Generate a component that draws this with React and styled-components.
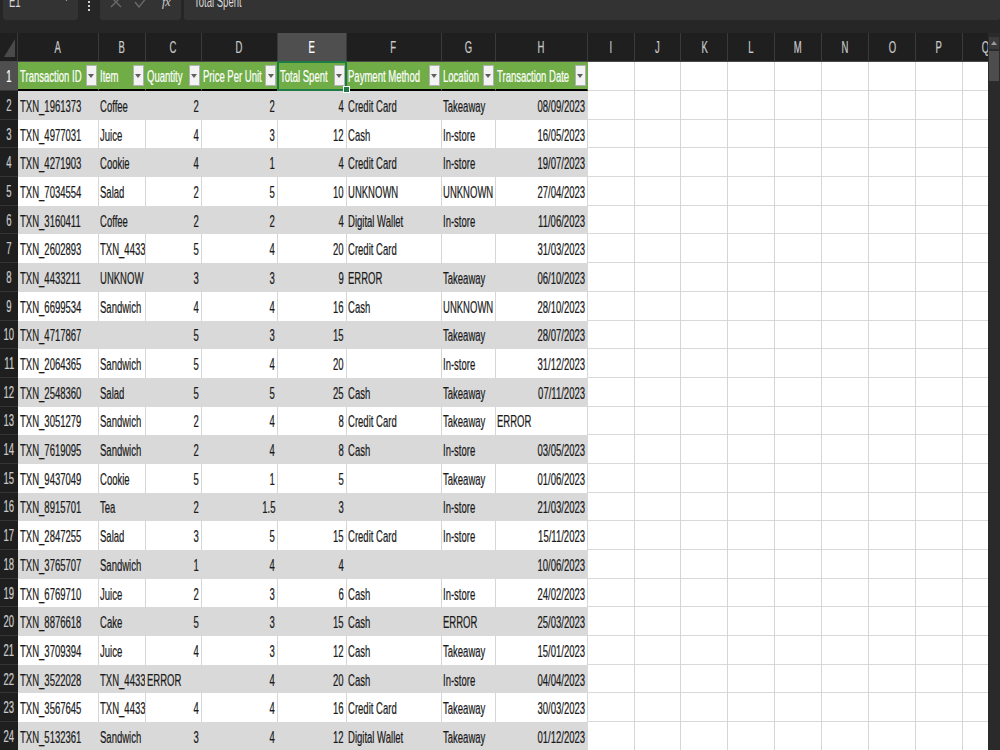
import React from 'react';
import styled, { createGlobalStyle } from 'styled-components';

const FONT = '"Liberation Sans", Arial, sans-serif';

// widths of row header + columns A..Q, measured off the sheet
const COLS = '18.3px 80.4px 47px 56px 76.6px 68.4px 95px 54px 92px repeat(9, 46.9px)';

// the sheet font is a tall, condensed face: squeeze Liberation Sans to match
const SQUEEZE = 'scale(0.68, 1.18)';

const GlobalStyle = createGlobalStyle`
  html, body {
    margin: 0;
    padding: 0;
    background: #262626;
    overflow: hidden;
  }
  body {
    font-family: ${FONT};
  }
`;

const Window = styled.div`
  width: 1000px;
  height: 750px;
  display: flex;
  flex-direction: column;
  background: #262626;
  overflow: hidden;
`;

const Toolbar = styled.div`
  height: 20px;
  flex: none;
  display: flex;
  align-items: flex-end;
  gap: 3px;
  padding-left: 3px;
  overflow: hidden;
`;

const Box = styled.div`
  height: 30px;
  display: flex;
  align-items: center;
  background: #333333;
  border-radius: 0 0 3px 3px;
  box-sizing: border-box;
  padding: 10px 8px 0 ${(p) => p.$padLeft || 6}px;
  color: #d8d8d8;
  font-size: 14px;
  width: ${(p) => (p.$width ? `${p.$width}px` : 'auto')};
  flex: ${(p) => (p.$grow ? 1 : 'none')};
  gap: ${(p) => p.$gap || 0}px;
`;

const BoxText = styled.span`
  display: inline-block;
  white-space: nowrap;
  transform-origin: left center;
  transform: translateY(-9px) ${SQUEEZE};
  flex: 1;
`;

const Dots = styled.div`
  width: 16px;
  flex: none;
  display: flex;
  flex-direction: column;
  align-items: center;
  gap: 2px;
  padding-bottom: 9px;
  & > i {
    width: 2px;
    height: 2px;
    background: #cfcfcf;
    display: block;
  }
`;

const Gap = styled.div`
  height: 13px;
  flex: none;
`;

const SheetArea = styled.div`
  flex: 1;
  display: flex;
  min-height: 0;
`;

const Grid = styled.div`
  flex: 1;
  overflow: hidden;
  position: relative;
`;

const Row = styled.div`
  display: grid;
  grid-template-columns: ${COLS};
  height: ${(p) => p.$h || 28.7}px;
`;

const origins = { left: 'left center', right: 'right center', center: 'center center' };

const Label = styled.span`
  display: inline-block;
  white-space: nowrap;
  transform-origin: ${(p) => origins[p.$align || 'left']};
  transform: ${SQUEEZE};
  -webkit-text-stroke: 0.2px currentColor;
`;

const ColHead = styled.div`
  background: ${(p) => (p.$active ? '#4f4f4f' : '#1f1f1f')};
  border-right: 1px solid #3a3a3a;
  border-bottom: 1px solid ${(p) => (p.$active ? '#2e8b57' : '#4a4a4a')};
  color: ${(p) => (p.$active ? '#ffffff' : '#c9c9c9')};
  font-size: 14px;
  display: flex;
  align-items: center;
  justify-content: center;
  overflow: hidden;
`;

const Corner = styled.div`
  background: #1f1f1f;
  border-right: 1px solid #3a3a3a;
  border-bottom: 1px solid #4a4a4a;
  display: flex;
  align-items: flex-end;
  justify-content: flex-end;
  padding: 0 2px 4px 0;
`;

const RowHead = styled.div`
  background: ${(p) => (p.$active ? '#4f4f4f' : '#1f1f1f')};
  border-bottom: 1px solid #353535;
  color: ${(p) => (p.$active ? '#ffffff' : '#c9c9c9')};
  font-size: 14px;
  display: flex;
  align-items: center;
  justify-content: center;
  box-sizing: border-box;
  overflow: hidden;
`;

const bg = { head: '#70ad47', grey: '#d9d9d9', white: '#ffffff', out: '#ffffff' };

const Cell = styled.div`
  position: relative;
  background: ${(p) => bg[p.$band]};
  color: ${(p) => (p.$band === 'head' ? '#ffffff' : '#1a1a1a')};
  font-size: 14px;
  box-sizing: border-box;
  display: flex;
  align-items: center;
  justify-content: ${(p) => (p.$num ? 'flex-end' : 'flex-start')};
  padding: 1px 2px 0 1.5px;
  white-space: nowrap;
  overflow: hidden;
  border-right: 1px solid
    ${(p) => (p.$band === 'grey' || p.$band === 'head' ? 'transparent' : '#d6d6d6')};
  border-bottom: ${(p) =>
    p.$band === 'head' ? '2px solid #000' : p.$band === 'out' ? '1px solid #d9d9d9' : 'none'};
`;

const Selection = styled.div`
  position: absolute;
  inset: -1px -1px -2px -1px;
  border: 2px solid #1f7a45;
  pointer-events: none;
  z-index: 2;
`;

const FilterButton = styled.div`
  position: absolute;
  right: 1px;
  top: 3px;
  bottom: 3px;
  width: 11px;
  background: #f3f3f3;
  border: 1px solid #b0b0b0;
  box-sizing: border-box;
  display: flex;
  align-items: center;
  justify-content: center;
  &::after {
    content: '';
    border-left: 3px solid transparent;
    border-right: 3px solid transparent;
    border-top: 4px solid #5f5f5f;
  }
`;

const FillHandle = styled.div`
  position: absolute;
  right: -4px;
  bottom: -4px;
  width: 5px;
  height: 5px;
  background: #1f7a45;
  border: 1px solid #ffffff;
  z-index: 3;
`;

const Scrollbar = styled.div`
  width: 12px;
  flex: none;
  background: #2a2a2a;
  display: flex;
  flex-direction: column;
  align-items: center;
  padding-top: 4px;
  gap: 2px;
`;

const ScrollArrow = styled.div`
  width: 10px;
  height: 12px;
  background: #3a3a3a;
  display: flex;
  align-items: center;
  justify-content: center;
  &::after {
    content: '';
    border-left: 3px solid transparent;
    border-right: 3px solid transparent;
    border-bottom: 4px solid #9a9a9a;
  }
`;

const ScrollThumb = styled.div`
  width: 10px;
  height: 30px;
  background: #4d4d4d;
`;

const letters = 'ABCDEFGHIJKLMNOPQ'.split('');

const header = [
  'Transaction ID', 'Item', 'Quantity', 'Price Per Unit',
  'Total Spent', 'Payment Method', 'Location', 'Transaction Date',
];

const rows = [
  ['TXN_1961373', 'Coffee', 2, 2, 4, 'Credit Card', 'Takeaway', '08/09/2023'],
  ['TXN_4977031', 'Juice', 4, 3, 12, 'Cash', 'In-store', '16/05/2023'],
  ['TXN_4271903', 'Cookie', 4, 1, 4, 'Credit Card', 'In-store', '19/07/2023'],
  ['TXN_7034554', 'Salad', 2, 5, 10, 'UNKNOWN', 'UNKNOWN', '27/04/2023'],
  ['TXN_3160411', 'Coffee', 2, 2, 4, 'Digital Wallet', 'In-store', '11/06/2023'],
  ['TXN_2602893', 'TXN_4433', 5, 4, 20, 'Credit Card', '', '31/03/2023'],
  ['TXN_4433211', 'UNKNOW', 3, 3, 9, 'ERROR', 'Takeaway', '06/10/2023'],
  ['TXN_6699534', 'Sandwich', 4, 4, 16, 'Cash', 'UNKNOWN', '28/10/2023'],
  ['TXN_4717867', '', 5, 3, 15, '', 'Takeaway', '28/07/2023'],
  ['TXN_2064365', 'Sandwich', 5, 4, 20, '', 'In-store', '31/12/2023'],
  ['TXN_2548360', 'Salad', 5, 5, 25, 'Cash', 'Takeaway', '07/11/2023'],
  ['TXN_3051279', 'Sandwich', 2, 4, 8, 'Credit Card', 'Takeaway', 'ERROR'],
  ['TXN_7619095', 'Sandwich', 2, 4, 8, 'Cash', 'In-store', '03/05/2023'],
  ['TXN_9437049', 'Cookie', 5, 1, 5, '', 'Takeaway', '01/06/2023'],
  ['TXN_8915701', 'Tea', 2, 1.5, 3, '', 'In-store', '21/03/2023'],
  ['TXN_2847255', 'Salad', 3, 5, 15, 'Credit Card', 'In-store', '15/11/2023'],
  ['TXN_3765707', 'Sandwich', 1, 4, 4, '', '', '10/06/2023'],
  ['TXN_6769710', 'Juice', 2, 3, 6, 'Cash', 'In-store', '24/02/2023'],
  ['TXN_8876618', 'Cake', 5, 3, 15, 'Cash', 'ERROR', '25/03/2023'],
  ['TXN_3709394', 'Juice', 4, 3, 12, 'Cash', 'Takeaway', '15/01/2023'],
  ['TXN_3522028', 'TXN_4433', 'ERROR', 4, 20, 'Cash', 'In-store', '04/04/2023'],
  ['TXN_3567645', 'TXN_4433', 4, 4, 16, 'Credit Card', 'Takeaway', '30/03/2023'],
  ['TXN_5132361', 'Sandwich', 3, 4, 12, 'Digital Wallet', 'Takeaway', '01/12/2023'],
];

const isNum = (v) => typeof v === 'number' || /^\d\d\/\d\d\/\d{4}$/.test(v);

function FormulaBar() {
  return (
    <Toolbar>
      <Box $width={75}>
        <BoxText>E1</BoxText>
        <svg width="7" height="4" viewBox="0 0 7 4" style={{ marginTop: -22 }}>
          <path d="M0 0h7L3.5 4z" fill="#bdbdbd" />
        </svg>
      </Box>
      <Dots><i /><i /><i /></Dots>
      <Box $width={81} $padLeft={10} $gap={12}>
        <svg width="12" height="12" viewBox="0 0 12 12" style={{ marginTop: -16 }}>
          <path d="M1 1l10 10M11 1L1 11" stroke="#6a6a6a" strokeWidth="1.4" />
        </svg>
        <svg width="14" height="12" viewBox="0 0 14 12" style={{ marginTop: -16 }}>
          <path d="M1 6l4 5 8-10" stroke="#6a6a6a" strokeWidth="1.4" fill="none" />
        </svg>
        <span style={{ marginTop: -16, marginLeft: 2, fontStyle: 'italic', fontFamily: 'Liberation Serif, serif', fontSize: 12, color: '#d0d0d0' }}>
          <i>f</i>x
        </span>
      </Box>
      <Box $grow $padLeft={10}>
        <BoxText>Total Spent</BoxText>
      </Box>
    </Toolbar>
  );
}

function App() {
  return (
    <>
      <GlobalStyle />
      <Window>
        <FormulaBar />
        <Gap />
        <SheetArea>
          <Grid>
            <Row $h={29}>
              <Corner>
                <svg width="11" height="18" viewBox="0 0 11 18">
                  <path d="M11 0v18H0z" fill="#4a4a4a" />
                </svg>
              </Corner>
              {letters.map((l) => (
                <ColHead key={l} $active={l === 'E'}>
                  <Label $align="center">{l}</Label>
                </ColHead>
              ))}
            </Row>

            <Row $h={29}>
              <RowHead $active><Label $align="center">1</Label></RowHead>
              {header.map((h, i) => (
                <Cell key={h} $band="head" style={i === 4 ? { overflow: 'visible', zIndex: 2 } : undefined}>
                  <Label>{h}</Label>
                  <FilterButton />
                  {i === 4 && (
                    <>
                      <Selection />
                      <FillHandle />
                    </>
                  )}
                </Cell>
              ))}
              {letters.slice(8).map((l) => (
                <Cell key={l} $band="out" />
              ))}
            </Row>

            {rows.map((r, idx) => {
              const band = idx % 2 === 0 ? 'grey' : 'white';
              return (
                <Row key={idx}>
                  <RowHead><Label $align="center">{idx + 2}</Label></RowHead>
                  {r.map((v, i) => (
                    <Cell key={i} $band={band} $num={isNum(v)}>
                      {v !== '' && <Label $align={isNum(v) ? 'right' : 'left'}>{v}</Label>}
                    </Cell>
                  ))}
                  {letters.slice(8).map((l) => (
                    <Cell key={l} $band="out" />
                  ))}
                </Row>
              );
            })}
          </Grid>
          <Scrollbar>
            <ScrollArrow />
            <ScrollThumb />
          </Scrollbar>
        </SheetArea>
      </Window>
    </>
  );
}

export default App;
